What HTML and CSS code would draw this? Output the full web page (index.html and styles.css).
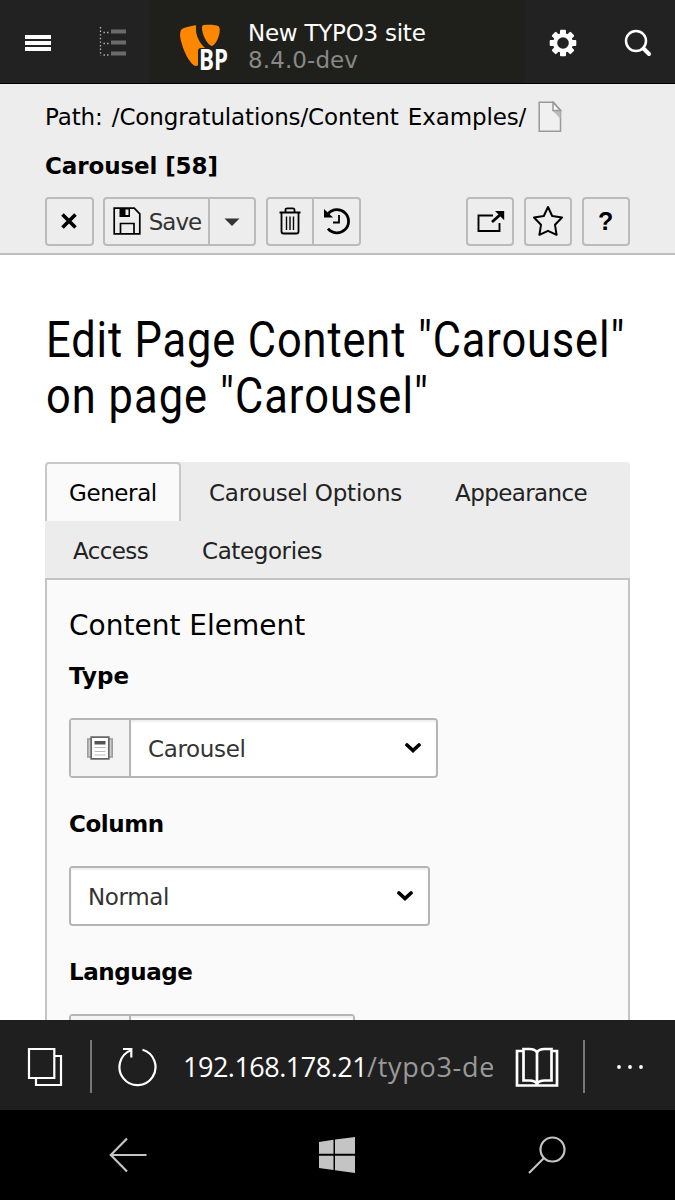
FILE: index.html
```html
<!DOCTYPE html>
<html lang="en">
<head>
<meta charset="utf-8">
<title>Edit Page Content</title>
<link rel="stylesheet" href="styles.css">
</head>
<body>
<div class="screen">
  <header class="topbar">
    <div class="tool"><svg width="28" height="18" viewBox="0 0 28 18"><path d="M1 1h26v4H1zM1 7h26v4H1zM1 13h26v4H1z" fill="#fff"/></svg></div>
    <div class="tool"><svg width="28" height="32" viewBox="0 0 28 32"><path d="M1.500 0v29M4.500 5.500h7M4.500 16.500h7M4.500 28h7" stroke="#bbb" stroke-width="1.300" stroke-dasharray="1.400 2.200" fill="none"/><path d="M12 2.500h15v4H12zM12 13.500h15v4H12zM12 24.500h15v4H12z" fill="#6b6b6b"/></svg></div>
    <div class="brand">
      <svg class="logo" width="50" height="50" viewBox="0 0 50 50"><path d="M18 2.200C13 3 5 4.500 3.500 6.500 1.500 9 2 14 3 18c2 8 8.500 24 15 25l3-1 6-17c-5-5-10-12-9-22.800z" fill="#ff8700"/><path d="M26 2c5-.7 12-.4 14.500 1.200 3.500 3-1 17.800-6.500 19.800C29 22 23.500 10 24 4.500c0-1.500.5-2.300 2-2.500z" fill="#ff8700"/><path d="M20 28q0-3 3-3h21v22H20z" fill="#1f1f1c"/><text x="21" y="47" class="logo-text" textLength="29" lengthAdjust="spacingAndGlyphs">BP</text></svg>
      <div class="site"><span class="site-name">New TYPO3 site</span><span class="site-version">8.4.0-dev</span></div>
    </div>
    <div class="tool"><svg width="28" height="28" viewBox="-14 -14 28 28"><g fill="#fff"><rect x="-3" y="-13.300" width="6" height="26.600" rx="1"/><rect x="-3" y="-13.300" width="6" height="26.600" rx="1" transform="rotate(45)"/><rect x="-3" y="-13.300" width="6" height="26.600" rx="1" transform="rotate(90)"/><rect x="-3" y="-13.300" width="6" height="26.600" rx="1" transform="rotate(135)"/><circle r="10"/></g><circle r="5.800" fill="#222"/></svg></div>
    <div class="tool"><svg width="28" height="28" viewBox="0 0 28 28" fill="none" stroke="#fff"><circle cx="12" cy="12" r="10" stroke-width="2.500"/><path d="M19.500 19.500l5.500 5.500" stroke-width="4" stroke-linecap="round"/></svg></div>
  </header>

  <section class="docheader">
    <div class="path"><span class="path-text">Path: /Congratulations/Content Examples/</span><svg width="24" height="32" viewBox="0 0 24 32"><path d="M1.200 1.200h14.300l7 8v21H1.200z" fill="#f0f0f0" stroke="#999" stroke-width="1.500"/><path d="M15 10h7.500v8z" fill="#bbb"/><path d="M15 1.500V9.500h7.500z" fill="#fff" stroke="#999" stroke-width="1.500"/></svg></div>
    <div class="record">Carousel [58]</div>
    <div class="buttons">
      <div class="btn"><svg width="18" height="18" viewBox="0 0 18 18"><path d="M2.500 2.500l13 13M15.500 2.500L2.500 15.500" stroke="#000" stroke-width="3.600"/></svg></div>
      <div class="group">
        <div class="btn save"><svg width="28" height="28" viewBox="0 0 28 28"><path d="M1.200 1.200h20l5.600 5.600v20H1.200zM7.500 26V16.500h13.500V26" fill="none" stroke="#000" stroke-width="1.700"/><path d="M6.500 1h10.500v9H6.500z"/><path d="M12.500 2.500h3v5.500h-3z" fill="#ededed"/></svg><span class="save-label">Save</span></div>
        <div class="btn drop"><svg width="16" height="8" viewBox="0 0 16 8"><path d="M.5 .5h15L8 8z" fill="#333"/></svg></div>
      </div>
      <div class="group">
        <div class="btn"><svg width="22" height="28" viewBox="0 0 22 28" fill="none" stroke="#000" stroke-width="1.800"><path d="M.5 5.500h21M2.500 6v18.500q0 2 2 2h13q2 0 2-2V6M6.500 5V3q0-1.700 1.700-1.700h5.600q1.700 0 1.700 1.700v2"/><path d="M7.500 9.500v13.500M11 9.500v13.500M14.500 9.500v13.500" stroke-width="1.400"/></svg></div>
        <div class="btn history"><svg width="28" height="28" viewBox="0 0 28 28" fill="none" stroke="#000"><path d="M5.300 6.500A11.600 11.600 0 1 1 5 21.600" stroke-width="2.800"/><path d="M16 8v7.500h-6" stroke-width="1.800"/><path d="M1 2v8.500h9z" fill="#000" stroke="none"/></svg></div>
      </div>
      <div class="spacer"></div>
      <div class="btn"><svg width="30" height="28" viewBox="0 0 30 28"><path d="M18 8.500H3.500v15.500h21v-8" fill="none" stroke="#000" stroke-width="1.900"/><path d="M17 15l9-8" stroke="#000" stroke-width="2.800"/><path d="M20 4h9.200v9.200z"/></svg></div>
      <div class="btn"><svg width="32" height="32" viewBox="0 0 32 32"><path d="M16 2l4.200 9 9.800 1.500-7 7.300 1.600 10L16 25.800l-8.600 4 1.600-10-7-7.300L11.800 11z" fill="none" stroke="#000" stroke-width="2" stroke-linejoin="round"/></svg></div>
      <div class="btn help">?</div>
    </div>
  </section>

  <main class="module">
    <h1 class="title"><span class="title-line">Edit Page Content "Carousel"</span><span class="title-line second">on page "Carousel"</span></h1>
    <nav class="tabs">
      <div class="tab-row"><span class="tab active">General</span><span class="tab options">Carousel Options</span><span class="tab appearance">Appearance</span></div>
      <div class="tab-row lower"><span class="tab access">Access</span><span class="tab categories">Categories</span></div>
    </nav>
    <div class="pane">
      <h2 class="section-title">Content Element</h2>
      <div class="label type-label">Type</div>
      <div class="select with-icon">
        <div class="addon"><svg width="28" height="24" viewBox="0 0 28 24"><path d="M1.800 3h24.400v18H1.800z" fill="#ccc" stroke="#999" stroke-width="1.500"/><path d="M5.200 1.200h17.600v21.600H5.200z" fill="#fff" stroke="#666" stroke-width="1.700"/><path d="M8.500 5h11v3.500h-11z" fill="#555"/><path d="M8.500 11.500h11M8.500 15.500h11M8.500 19h11" stroke="#bbb"/></svg></div>
        <div class="value"><span class="value-text">Carousel</span><svg width="16" height="12" viewBox="0 0 16 12"><path d="M2 3l6 5.500L14 3" fill="none" stroke="#000" stroke-width="3.700" stroke-linecap="round"/></svg></div>
      </div>
      <div class="label">Column</div>
      <div class="select plain">
        <div class="value"><span class="value-text">Normal</span><svg width="16" height="12" viewBox="0 0 16 12"><path d="M2 3l6 5.500L14 3" fill="none" stroke="#000" stroke-width="3.700" stroke-linecap="round"/></svg></div>
      </div>
      <div class="label">Language</div>
      <div class="select language"><div class="addon"></div><div class="value"></div></div>
    </div>
  </main>

  <footer class="browser">
    <svg width="36" height="40" viewBox="0 0 36 40"><path d="M2 2h25.300v29H2zM27.500 9h6.500v29H9v-6.500" fill="none" stroke="#fff" stroke-width="2.200"/></svg>
    <i class="rule"></i>
    <svg width="40" height="40" viewBox="0 0 40 40"><path d="M14 3.300A18 18 0 1 0 25.500 2.800" fill="none" stroke="#fff" stroke-width="2.200"/><path d="M6 2h8.300v8.500" fill="none" stroke="#fff" stroke-width="2.200"/></svg>
    <div class="url">192.168.178.21<span class="url-path">/typo3-dev</span></div>
    <svg width="44" height="42" viewBox="0 0 44 42"><path d="M7.500 5H2v34.500h40V5h-5.500M22 6.500Q20 3 14.500 3H8.500v31.500h6Q20 34.500 22 38q2-3.500 7.500-3.500h7V3h-7Q24 3 22 6.500zV38" fill="none" stroke="#fff" stroke-width="2.700"/></svg>
    <i class="rule"></i>
    <svg width="28" height="6" viewBox="0 0 28 6"><g fill="#fff"><circle cx="3" cy="3" r="1.900"/><circle cx="14" cy="3" r="1.900"/><circle cx="25" cy="3" r="1.900"/></g></svg>
  </footer>
  <footer class="system">
    <svg width="38" height="36" viewBox="0 0 38 36"><path d="M18 1.500L1.800 18 18 34.500M1.800 18H37.500" fill="none" stroke="#c4c4c4" stroke-width="2.200"/></svg>
    <svg width="36" height="36" viewBox="0 0 36 36"><path d="M0 5l14.500-2.300v14H0zM16 2.500L36 0v16.700H16zM0 18.700h14.500v14.200L0 31zM16 18.700h20V36l-20-2.800z" fill="#c4c4c4"/></svg>
    <svg width="40" height="40" viewBox="0 0 40 40"><circle cx="25.500" cy="14.500" r="12" fill="none" stroke="#c4c4c4" stroke-width="2.200"/><path d="M17 23L2 38" stroke="#c4c4c4" stroke-width="2.200"/></svg>
  </footer>
</div>
</body>
</html>
```
FILE: styles.css
```css
* { box-sizing: border-box; }
body { margin: 0; background: #fff; color: #000; font: 23px/30px "DejaVu Sans", Verdana, sans-serif; }
svg { display: block; flex: none; }
.screen { width: 675px; height: 1200px; overflow: hidden; display: flex; flex-direction: column; white-space: nowrap; }

.topbar { height: 84px; flex: none; display: grid; grid-template-columns: 75px 75px 375px 75px 75px; background: #222; border-bottom: 1px solid #000; }
.tool { display: flex; align-items: center; justify-content: center; padding-top: 2px; }
.brand { display: flex; background: #1f1f1c; padding: 23px 0 0 28px; }
.logo { overflow: visible; }
.logo-text { font: bold 28px "Open Sans", sans-serif; fill: #fff; }
.site { display: flex; flex-direction: column; margin: -3px 0 0 20px; line-height: 27px; color: #fff; }
.site-name { letter-spacing: -.25px; }
.site-version { color: #888; letter-spacing: .1px; }

.docheader { height: 171px; flex: none; background: #ededed; border-bottom: 2px solid #bfbfbf; padding: 17px 45px 0; }
.path { display: flex; align-items: center; gap: 12px; height: 32px; }
.path-text { line-height: 32px; word-spacing: 2px; letter-spacing: -.13px; }
.record { font-weight: bold; height: 30px; margin-top: 18px; letter-spacing: -.1px; }
.buttons { display: flex; gap: 9.500px; margin-top: 16px; }
.btn { width: 48.500px; height: 48.500px; border: 2px solid #bbb; border-radius: 4px; display: flex; align-items: center; justify-content: center; color: #333; }
.group { display: flex; }
.group .btn:first-child { border-radius: 4px 0 0 4px; }
.group .btn + .btn { border-left: 0; border-radius: 0 4px 4px 0; }
.group .save { width: 107px; gap: 8px; padding-left: 1px; }
.save-label { letter-spacing: -1px; padding-top: 2px; }
.group .drop { width: 46px; padding-top: 2px; }
.group .history { width: 47px; }
.spacer { flex: 1; }
.help { color: #000; font: bold 25px "Liberation Sans", sans-serif; }

.module { height: 765px; flex: none; overflow: hidden; padding: 57px 45px 0; }
.title { margin: 0; font: 400 50px/56px Roboto, sans-serif; }
.title-line { display: block; width: max-content; margin-left: 1px; transform: scaleX(.868); transform-origin: left; letter-spacing: 1px; }
.second { letter-spacing: 1.200px; }
.tabs { margin-top: 38px; height: 116px; background: #ececec; border-radius: 4px 4px 0 0; }
.tab-row { display: flex; height: 59px; color: #222; letter-spacing: -.4px; }
.tab { line-height: 63px; }
.tab.active { width: 136px; height: 59px; border: 2px solid #c8c8c8; border-bottom: 0; border-radius: 4px 4px 0 0; background: #fafafa; color: #000; padding-left: 22px; line-height: 59px; }
.options { margin-left: 28px; width: 246px; letter-spacing: -.2px; }
.appearance { letter-spacing: -.6px; }
.access { margin-left: 28px; width: 129px; letter-spacing: -.6px; }
.lower .tab { line-height: 61px; }
.pane { height: 500px; border: 2px solid #c4c4c4; background: #fafafa; padding: 28px 22px; }
.section-title { margin: 0; font-size: 28px; line-height: 36px; height: 34px; font-weight: 400; }
.label { font-weight: bold; line-height: 31px; height: 30px; margin-top: 31px; letter-spacing: -.45px; }
.type-label { margin-top: 19px; letter-spacing: 0; }
.select { display: flex; height: 60px; border: 2px solid #b5b5b5; border-radius: 4px; background: #fff; color: #333; margin-top: 27px; }
.with-icon { width: 369px; }
.plain { width: 361px; }
.language { width: 286px; }
.addon { width: 60px; border-right: 2px solid #b5b5b5; background: #f4f4f4; display: flex; align-items: center; justify-content: center; }
.value { flex: 1; display: flex; align-items: center; justify-content: space-between; padding: 0 15px 0 17px; box-shadow: inset 0 2px 2px #eee; }
.value-text { letter-spacing: -.35px; padding-top: 2px; }

.browser { height: 90px; flex: none; display: flex; align-items: center; background: #1f1f1f; padding: 3px 30px 0 27px; }
.rule { width: 2px; height: 53px; background: #777; margin-left: 27px; }
.rule + svg { margin-left: 25px; }
.url { width: 310px; margin-left: 26px; overflow: hidden; color: #fff; font: 27px/40px "Open Sans", sans-serif; letter-spacing: -.5px; }
.url + svg { margin-left: 22px; }
.url-path { color: #999; letter-spacing: .7px; }
.url ~ .rule { margin-left: 24px; }
.url ~ .rule + svg { margin-left: 31px; }
.system { height: 90px; flex: none; display: flex; align-items: center; justify-content: space-between; background: #000; padding: 0 108px 1px 109px; }
```
